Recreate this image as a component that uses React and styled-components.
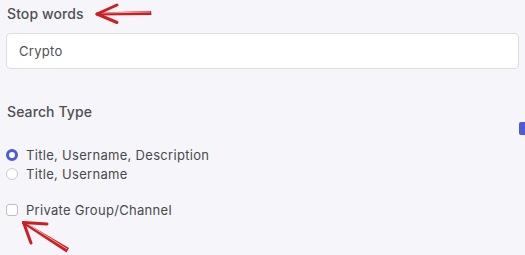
import React from 'react';
import styled, { createGlobalStyle } from 'styled-components';

const GlobalStyle = createGlobalStyle`
  html, body {
    margin: 0;
    padding: 0;
    background: #f6f6fa;
  }
  body {
    font-family: "Inter", "Open Sans", sans-serif;
    width: 525px;
    height: 255px;
    overflow: hidden;
  }
`;

const Page = styled.div`
  position: relative;
  height: 255px;
  padding: 4px 6px 0 6px;
  box-sizing: border-box;
`;

const Label = styled.div`
  font-size: 14px;
  font-weight: 500;
  line-height: 20px;
  letter-spacing: 0.1px;
  color: #4f4f55;
  margin-left: 1px;
  margin-top: ${p => p.$top || 0}px;
`;

const Input = styled.input`
  display: block;
  box-sizing: border-box;
  width: 513px;
  height: 36px;
  margin-top: 9px;
  padding: 0 12px;
  border: 1px solid #dcdce2;
  border-radius: 4px;
  background: #fff;
  font-family: inherit;
  font-size: 13px;
  letter-spacing: 0.3px;
  color: #4f4f55;
  outline: none;
`;

const Options = styled.div`
  display: flex;
  flex-direction: column;
  margin-top: ${p => p.$top || 0}px;
`;

const Option = styled.label`
  display: flex;
  align-items: center;
  gap: 8px;
  height: 19px;
  font-size: 13px;
  letter-spacing: 0.3px;
  color: #48484e;
`;

const Radio = styled.span`
  box-sizing: border-box;
  width: 12px;
  height: 12px;
  border-radius: 50%;
  background: #fff;
  border: ${p => (p.$checked ? '3px solid #4d5bd4' : '1px solid #c9c9cf')};
`;

const Check = styled.span`
  box-sizing: border-box;
  width: 12px;
  height: 12px;
  border-radius: 3px;
  background: #fff;
  border: 1px solid #bdbdc4;
`;

const EdgeButton = styled.div`
  position: absolute;
  right: 0;
  top: 122px;
  width: 6px;
  height: 13px;
  background: #4d5bd4;
  border-radius: 2px 0 0 2px;
`;

const Annotation = styled.svg`
  position: absolute;
  left: ${p => p.$x}px;
  top: ${p => p.$y}px;
  overflow: visible;
`;

const ArrowLeft = () => (
  <Annotation $x={94} $y={2} width="60" height="24" viewBox="0 0 60 24">
    <path d="M3 10.5 L57 9 L57.5 13 L3 13.5 Z" fill="#cc1f24" />
    <path d="M6 11 L56 10" stroke="#f4b3b5" strokeWidth="0.9" />
    <path d="M3 12 L23 3" stroke="#cc1f24" strokeWidth="3" strokeLinecap="round" />
    <path d="M3 12 L23 20.5" stroke="#cc1f24" strokeWidth="3" strokeLinecap="round" />
  </Annotation>
);

const ArrowUpLeft = () => (
  <Annotation $x={20} $y={218} width="52" height="36" viewBox="0 0 52 36">
    <path d="M3 3 L49 30 L46.5 34.5 L3 6 Z" fill="#cc1f24" />
    <path d="M6 5 L47 31" stroke="#f4b3b5" strokeWidth="0.9" />
    <path d="M3.5 4.5 L27 6" stroke="#cc1f24" strokeWidth="3" strokeLinecap="round" />
    <path d="M3.5 4.5 L11 25" stroke="#cc1f24" strokeWidth="3" strokeLinecap="round" />
  </Annotation>
);

export default function App() {
  return (
    <>
      <GlobalStyle />
      <Page>
        <Label>Stop words</Label>
        <Input defaultValue="Crypto" />
        <Label $top={33}>Search Type</Label>
        <Options $top={23}>
          <Option><Radio $checked />Title, Username, Description</Option>
          <Option><Radio />Title, Username</Option>
        </Options>
        <Options $top={17}>
          <Option><Check />Private Group/Channel</Option>
        </Options>
        <EdgeButton />
        <ArrowLeft />
        <ArrowUpLeft />
      </Page>
    </>
  );
}
